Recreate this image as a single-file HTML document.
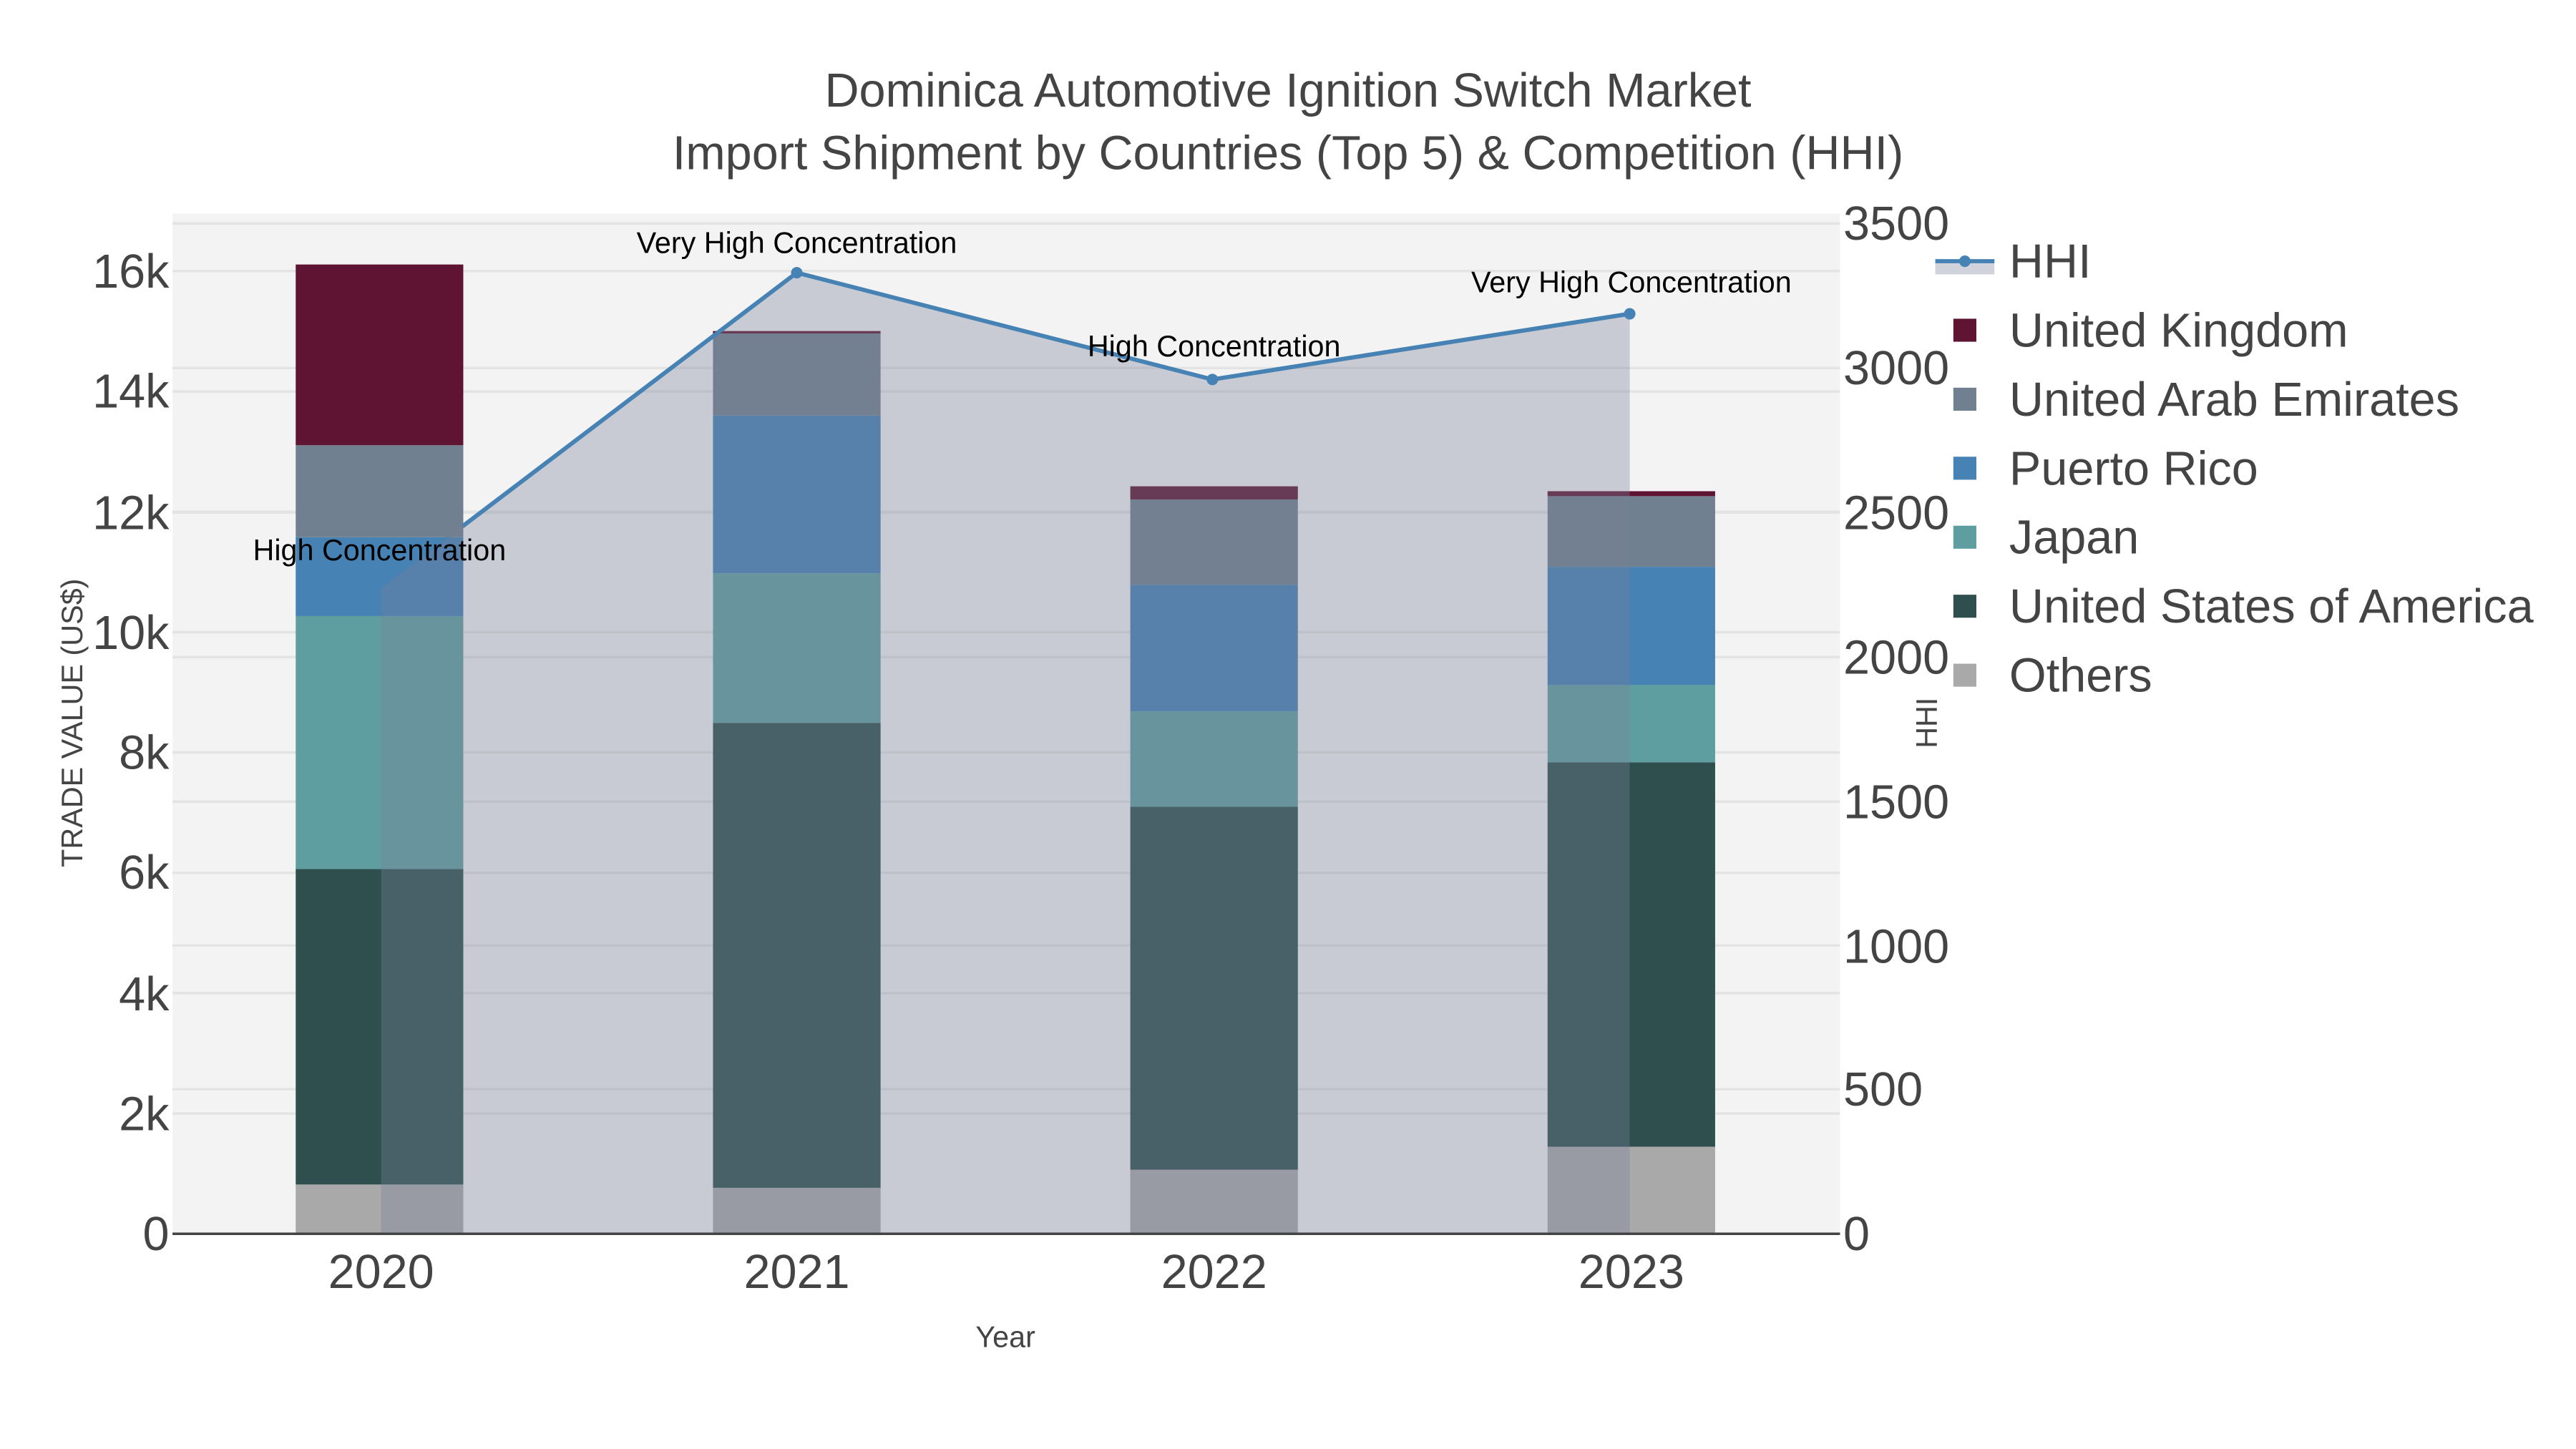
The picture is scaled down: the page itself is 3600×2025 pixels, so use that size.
<!DOCTYPE html>
<html><head><meta charset="utf-8"><style>html,body{margin:0;padding:0;background:#fff}svg{display:block}</style></head>
<body>
<svg width="3600" height="2025" viewBox="0 0 1568 882" xmlns="http://www.w3.org/2000/svg" font-family="Liberation Sans, sans-serif">
<rect x="0" y="0" width="1568" height="882" fill="#fff"/>
<rect x="105" y="130" width="1015" height="621" fill="#f3f3f3"/>
<g stroke="#e3e3e3" stroke-width="1.5">
<line x1="105" y1="677.8" x2="1120" y2="677.8"/><line x1="105" y1="604.5" x2="1120" y2="604.5"/>
<line x1="105" y1="531.3" x2="1120" y2="531.3"/><line x1="105" y1="458" x2="1120" y2="458"/>
<line x1="105" y1="384.8" x2="1120" y2="384.8"/><line x1="105" y1="311.5" x2="1120" y2="311.5"/>
<line x1="105" y1="238.3" x2="1120" y2="238.3"/><line x1="105" y1="165" x2="1120" y2="165"/>
<line x1="105" y1="663" x2="1120" y2="663"/><line x1="105" y1="575.5" x2="1120" y2="575.5"/>
<line x1="105" y1="488" x2="1120" y2="488"/><line x1="105" y1="400" x2="1120" y2="400"/>
<line x1="105" y1="312" x2="1120" y2="312"/><line x1="105" y1="224" x2="1120" y2="224"/>
<line x1="105" y1="136" x2="1120" y2="136"/>
</g>
<polyline points="232,358 485,166 738,231 992,191" fill="none" stroke="#4682b4" stroke-width="2.5"/>
<g>
<rect x="180" y="721" width="102" height="30" fill="#a9a9a9"/>
<rect x="180" y="529" width="102" height="192" fill="#2f4f4f"/>
<rect x="180" y="375" width="102" height="154" fill="#5f9ea0"/>
<rect x="180" y="327" width="102" height="48" fill="#4682b4"/>
<rect x="180" y="271" width="102" height="56" fill="#708090"/>
<rect x="180" y="161" width="102" height="110" fill="#5f1434"/>

<rect x="434" y="723" width="102" height="28" fill="#a9a9a9"/>
<rect x="434" y="440" width="102" height="283" fill="#2f4f4f"/>
<rect x="434" y="349" width="102" height="91" fill="#5f9ea0"/>
<rect x="434" y="253" width="102" height="96" fill="#4682b4"/>
<rect x="434" y="203" width="102" height="50" fill="#708090"/>
<rect x="434" y="201.5" width="102" height="1.5" fill="#5f1434"/>

<rect x="688" y="712" width="102" height="39" fill="#a9a9a9"/>
<rect x="688" y="491" width="102" height="221" fill="#2f4f4f"/>
<rect x="688" y="433" width="102" height="58" fill="#5f9ea0"/>
<rect x="688" y="356" width="102" height="77" fill="#4682b4"/>
<rect x="688" y="304" width="102" height="52" fill="#708090"/>
<rect x="688" y="296" width="102" height="8" fill="#5f1434"/>

<rect x="942" y="698" width="102" height="53" fill="#a9a9a9"/>
<rect x="942" y="464" width="102" height="234" fill="#2f4f4f"/>
<rect x="942" y="417" width="102" height="47" fill="#5f9ea0"/>
<rect x="942" y="345" width="102" height="72" fill="#4682b4"/>
<rect x="942" y="302" width="102" height="43" fill="#708090"/>
<rect x="942" y="299" width="102" height="3" fill="#5f1434"/>
</g>
<polygon points="232,751 232,358 485,166 738,231 992,191 992,751" fill="rgb(119,130,153)" fill-opacity="0.35"/>
<polyline points="282,320 485,166 738,231 992,191" fill="none" stroke="#4682b4" stroke-width="2.5"/>
<g fill="#4682b4"><circle cx="485" cy="166" r="3.5"/><circle cx="738" cy="231" r="3.5"/><circle cx="992" cy="191" r="3.5"/></g>
<line x1="105" y1="751" x2="1120" y2="751" stroke="#444" stroke-width="1.5"/>
<g font-size="18" fill="#000" text-anchor="middle">
<text x="231" y="341">High Concentration</text>
<text x="485" y="154">Very High Concentration</text>
<text x="739" y="217">High Concentration</text>
<text x="993" y="178">Very High Concentration</text>
</g>
<g font-size="29" fill="#444" text-anchor="end">
<text x="103" y="761">0</text><text x="103" y="688">2k</text><text x="103" y="615">4k</text>
<text x="103" y="541">6k</text><text x="103" y="468">8k</text><text x="103" y="395">10k</text>
<text x="103" y="322">12k</text><text x="103" y="248">14k</text><text x="103" y="175">16k</text>
</g>
<g font-size="29" fill="#444" text-anchor="start">
<text x="1122" y="761">0</text><text x="1122" y="673">500</text><text x="1122" y="586">1000</text>
<text x="1122" y="498">1500</text><text x="1122" y="410">2000</text><text x="1122" y="322">2500</text>
<text x="1122" y="234">3000</text><text x="1122" y="146">3500</text>
</g>
<g font-size="29" fill="#444" text-anchor="middle">
<text x="232" y="784">2020</text><text x="485" y="784">2021</text><text x="739" y="784">2022</text><text x="993" y="784">2023</text>
</g>
<text x="612" y="820" font-size="18" fill="#444" text-anchor="middle">Year</text>
<text transform="translate(50,440) rotate(-90)" font-size="18" fill="#444" text-anchor="middle">TRADE VALUE (US$)</text>
<text transform="translate(1179,440) rotate(-90)" font-size="18" fill="#444" text-anchor="middle">HHI</text>
<g font-size="29" fill="#444" text-anchor="middle">
<text x="784" y="65">Dominica Automotive Ignition Switch Market</text>
<text x="784" y="103">Import Shipment by Countries (Top 5) &amp; Competition (HHI)</text>
</g>
<rect x="1178" y="159" width="36" height="8" fill="rgb(119,130,153)" fill-opacity="0.35"/>
<line x1="1178" y1="159" x2="1214" y2="159" stroke="#4682b4" stroke-width="2.5"/>
<circle cx="1196" cy="159" r="3.5" fill="#4682b4"/>
<rect x="1189" y="194" width="14" height="14" fill="#5f1434"/>
<rect x="1189" y="236" width="14" height="14" fill="#708090"/>
<rect x="1189" y="278" width="14" height="14" fill="#4682b4"/>
<rect x="1189" y="320" width="14" height="14" fill="#5f9ea0"/>
<rect x="1189" y="362" width="14" height="14" fill="#2f4f4f"/>
<rect x="1189" y="404" width="14" height="14" fill="#a9a9a9"/>
<g font-size="29" fill="#444">
<text x="1223" y="169">HHI</text>
<text x="1223" y="211">United Kingdom</text>
<text x="1223" y="253">United Arab Emirates</text>
<text x="1223" y="295">Puerto Rico</text>
<text x="1223" y="337">Japan</text>
<text x="1223" y="379">United States of America</text>
<text x="1223" y="421">Others</text>
</g>
</svg>
</body></html>
